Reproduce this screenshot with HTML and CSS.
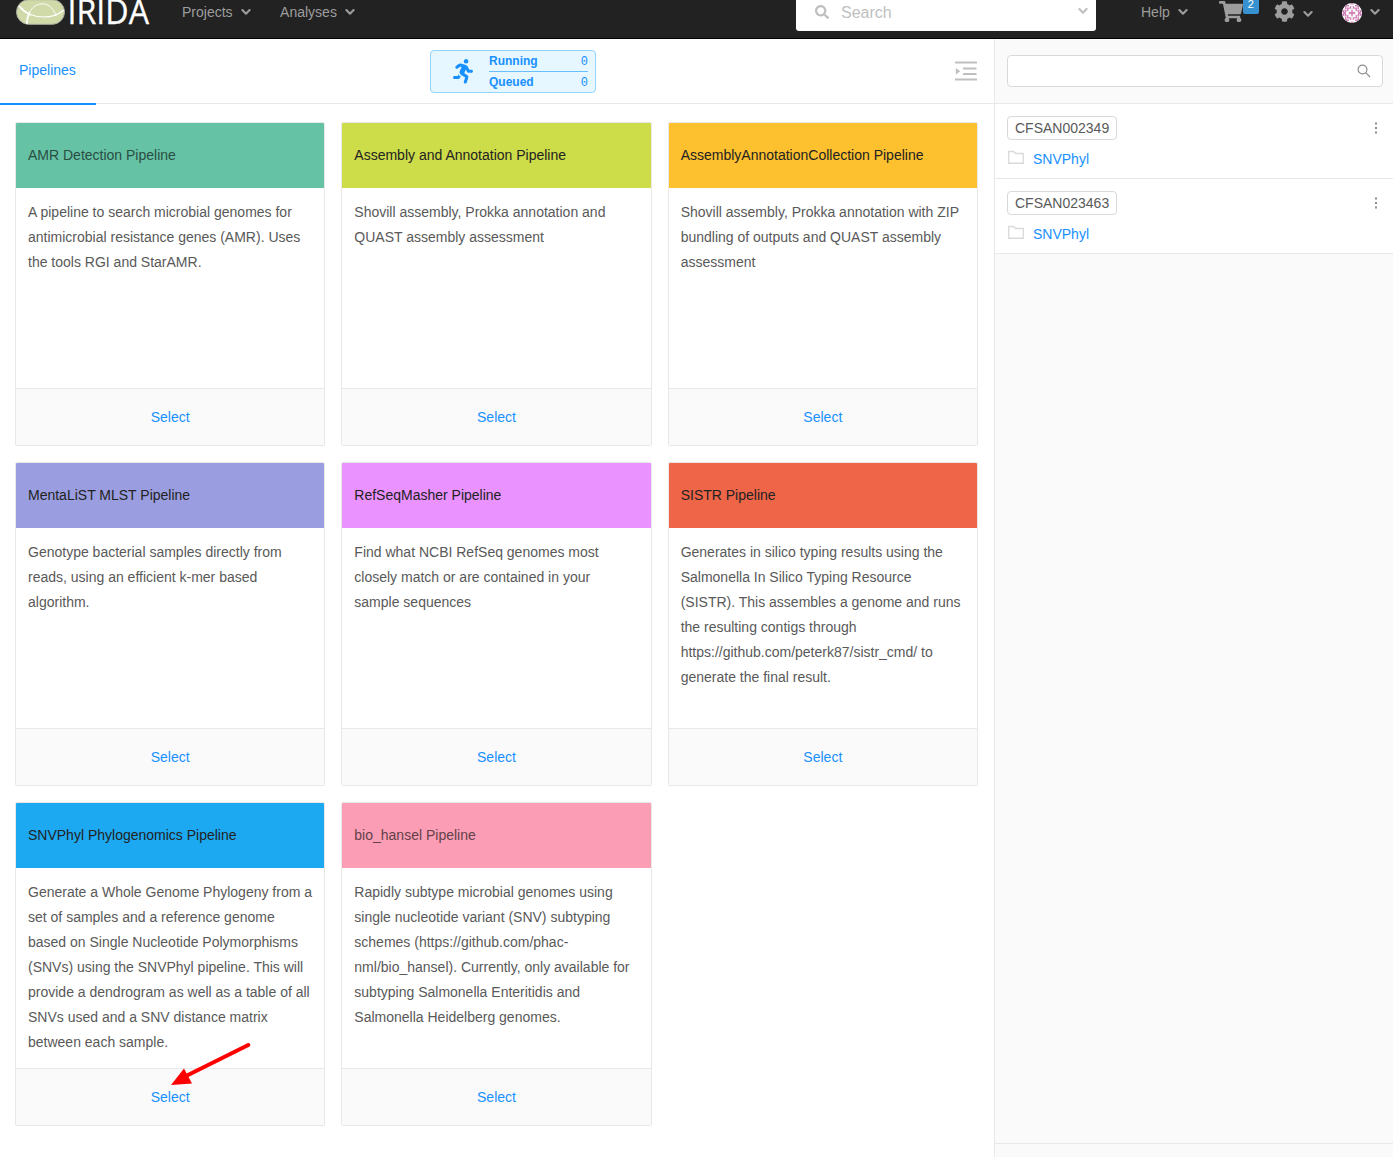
FILE: index.html
```html
<!DOCTYPE html>
<html lang="en">
<head>
<meta charset="utf-8">
<title>IRIDA - Pipelines</title>
<link rel="stylesheet" href="styles.css">
</head>
<body>
<svg class="defs" width="0" height="0" aria-hidden="true">
  <symbol id="chevron" viewBox="0 0 10 8"><path d="M1.400 2.100 5 5.700 8.600 2.100" fill="none" stroke="currentColor" stroke-width="2.100" stroke-linecap="round" stroke-linejoin="round"/></symbol>
  <symbol id="folder" viewBox="0 0 18 16"><path d="M1.750 2.500H6.500L8.500 4.500H16.250V14.250H1.750Z" fill="none" stroke="currentColor" stroke-width="1.300"/></symbol>
  <symbol id="more" viewBox="0 0 4 12"><path d="M1 .5h2v2H1zM1 5h2v2H1zM1 9.500h2v2H1z" fill="currentColor"/></symbol>
</svg>
<header class="navbar">
  <svg class="logo" width="150" height="38" viewBox="0 0 150 38">
    <rect x="16.500" y="-.3" width="48" height="24.600" rx="12.300" fill="#cfdaa8" stroke="#a9aaa0" stroke-width="1"/>
    <g fill="none" stroke="#fff"><path d="M19 5.500C26 14.500 36 17 44 17S58 15 64 10" stroke-width="1.200"/><path d="M27 24C27 14 32 4 42.500 3.800 50 4 54 10 56 16" stroke-width=".9"/><path d="M19 6C22 10 26 13 31 15M26.800 24C27 19 28 15 30 12" stroke-width="1.500"/></g>
    <text x="67.500" y="24.300" textLength="81.500" lengthAdjust="spacingAndGlyphs" class="wordmark">IRIDA</text>
  </svg>
  <nav class="menu">
    <a class="menu-item">Projects<svg class="chev"><use href="#chevron"/></svg></a>
    <a class="menu-item">Analyses<svg class="chev"><use href="#chevron"/></svg></a>
  </nav>
  <div class="global-search">
    <svg width="14" height="14" viewBox="0 0 512 512"><path fill="currentColor" d="M505 442.700L405.300 343c-4.500-4.500-10.600-7-17-7H372c27.600-35.300 44-79.700 44-128C416 93.100 322.900 0 208 0S0 93.100 0 208s93.100 208 208 208c48.300 0 92.700-16.400 128-44v16.300c0 6.400 2.500 12.500 7 17l99.700 99.700c9.400 9.400 24.600 9.400 33.900 0l28.300-28.300c9.400-9.400 9.400-24.600.1-34zM208 336c-70.700 0-128-57.200-128-128 0-70.700 57.200-128 128-128 70.700 0 128 57.200 128 128 0 70.700-57.200 128-128 128z"/></svg>
    <span class="placeholder">Search</span>
    <svg class="chev"><use href="#chevron"/></svg>
  </div>
  <nav class="tools">
    <a class="menu-item">Help<svg class="chev"><use href="#chevron"/></svg></a>
    <a class="cart">
      <svg width="24" height="21.300" viewBox="0 0 576 512"><path fill="currentColor" d="M528.120 301.319l47.273-208C578.806 78.301 567.391 64 551.990 64H159.208l-9.166-44.810C147.758 8.021 137.930 0 126.529 0H24C10.745 0 0 10.745 0 24v16c0 13.255 10.745 24 24 24h69.883l70.248 343.435C147.325 417.100 136 435.222 136 456c0 30.928 25.072 56 56 56s56-25.072 56-56c0-15.674-6.447-29.835-16.824-40h209.647C430.447 426.165 424 440.326 424 456c0 30.928 25.072 56 56 56s56-25.072 56-56c0-22.172-12.888-41.332-31.579-50.405l5.517-24.276c3.413-15.018-8.002-29.319-23.403-29.319H218.117l-6.545-32h293.145c11.206 0 20.920-7.754 23.403-18.681z"/></svg>
      <span class="badge">2</span>
    </a>
    <a class="settings">
      <svg class="cog" width="21" height="21" viewBox="0 0 512 512"><path fill="currentColor" d="M487.400 315.700l-42.600-24.600c4.300-23.200 4.300-47 0-70.200l42.600-24.600c4.900-2.800 7.100-8.600 5.500-14-11.100-35.600-30-67.800-54.700-94.600-3.800-4.100-10-5.100-14.800-2.300L380.800 110c-17.900-15.400-38.500-27.300-60.800-35.100V25.800c0-5.600-3.900-10.500-9.400-11.700-36.700-8.200-74.300-7.800-109.200 0-5.500 1.200-9.400 6.100-9.400 11.700V75c-22.200 7.900-42.800 19.800-60.800 35.100L88.700 85.500c-4.900-2.800-11-1.900-14.800 2.300-24.700 26.700-43.600 58.900-54.700 94.600-1.700 5.400.6 11.200 5.500 14L67.300 221c-4.300 23.200-4.300 47 0 70.200l-42.600 24.600c-4.900 2.800-7.100 8.600-5.500 14 11.100 35.600 30 67.800 54.700 94.600 3.800 4.100 10 5.100 14.800 2.300l42.600-24.600c17.900 15.400 38.500 27.300 60.800 35.100v49.200c0 5.600 3.900 10.500 9.400 11.700 36.700 8.200 74.300 7.800 109.200 0 5.500-1.200 9.400-6.100 9.400-11.700v-49.200c22.200-7.900 42.800-19.800 60.800-35.100l42.600 24.600c4.900 2.800 11 1.900 14.800-2.300 24.700-26.700 43.600-58.900 54.700-94.600 1.500-5.500-.7-11.300-5.600-14.100zM256 336c-44.100 0-80-35.900-80-80s35.900-80 80-80 80 35.900 80 80-35.900 80-80 80z"/></svg>
      <svg class="chev low"><use href="#chevron"/></svg>
    </a>
    <a class="account">
      <svg class="avatar" width="20" height="20" viewBox="0 0 20 20"><clipPath id="round"><circle cx="10" cy="10" r="10"/></clipPath><g clip-path="url(#round)"><path d="M0 0h20v20H0z" fill="#fff"/><path fill="#d184b8" d="M3 2h4v1.500H4.500V6H3zM17 2h-4v1.500h2.500V6H17zM3 18h4v-1.500H4.500V14H3zM17 18h-4v-1.500h2.500V14H17zM8.500 0h3v1.500h-3zM8.500 18.500h3V20h-3zM0 7h2v2H0zM18 7h2v2h-2zM0 11h2v2H0zM18 11h2v2h-2zM1 9h3v2H1zM16 9h3v2h-3zM2.500 6.500h2V9h-2zM15.500 6.500h2V9h-2zM2.500 11h2v2.500h-2zM15.500 11h2v2.500h-2zM5 4.500h3V3h1.300v2.800H6.500V8H5zM15 4.500h-3V3h-1.300v2.800h2.800V8H15zM5 15.500h3V17h1.300v-2.800H6.500V12H5zM15 15.500h-3V17h-1.300v-2.800h2.800V12H15zM9.300 6.500h1.400v2h2.500v3h-2.500v2H9.300v-2H6.800v-3h2.500z"/><path d="M7.500 7.500h1.500V9H7.500zM11 7.500h1.500V9H11zM7.500 11h1.500v1.500H7.500zM11 11h1.500v1.500H11z" fill="#fff"/></g></svg>
      <svg class="chev"><use href="#chevron"/></svg>
    </a>
  </nav>
</header>
<div class="page">
  <main class="main">
    <div class="toolbar">
      <div class="tab">Pipelines</div>
      <div class="status">
        <svg width="20" height="24.600" viewBox="0 0 416 512"><path fill="currentColor" d="M272 96c26.510 0 48-21.490 48-48S298.510 0 272 0s-48 21.490-48 48 21.490 48 48 48zM113.690 317.470l-14.800 34.520H32c-17.670 0-32 14.330-32 32s14.330 32 32 32h77.450c19.250 0 36.580-11.440 44.110-29.090l8.790-20.520-10.670-6.300c-17.320-10.230-30.060-25.370-37.990-42.610zM384 223.990h-44.030l-26.060-53.250c-12.500-25.550-35.450-44.230-61.780-50.940l-71.080-21.140c-28.300-6.800-57.770-.55-80.840 17.140l-39.670 30.410c-14.030 10.750-16.690 30.830-5.940 44.860s30.840 16.690 44.860 5.940l39.690-30.410c7.670-5.890 17.440-8 25.270-6.140l14.700 4.370-37.460 87.390c-12.620 29.480-1.310 64.010 26.300 80.310l84.980 50.170-27.470 87.730c-5.280 16.860 4.110 34.820 20.970 40.090 3.190 1 6.410 1.480 9.580 1.480 13.610 0 26.230-8.770 30.520-22.450l31.640-101.060c5.910-20.770-2.890-43.080-21.640-54.390l-61.240-36.140 31.310-78.280 20.270 41.430c8 16.340 24.920 26.890 43.110 26.890H384c17.670 0 32-14.330 32-32s-14.330-31.990-32-31.990z"/></svg>
        <div class="counts">
          <div class="count"><b>Running</b><span>0</span></div>
          <div class="count"><b>Queued</b><span>0</span></div>
        </div>
      </div>
      <svg class="fold" width="22" height="20" viewBox="0 0 22 20"><path d="M0 1.500h22M8 7.500h13.500M8 13h13.500M0 18.500h22" fill="none" stroke="currentColor" stroke-width="1.800"/><path d="M.8 7v6.500L5.200 10.200z" fill="currentColor"/></svg>
    </div>
    <div class="grid">
      <section class="card"><h2 class="green">AMR Detection Pipeline</h2><p>A pipeline to search microbial genomes for antimicrobial resistance genes (AMR). Uses the tools RGI and StarAMR.</p><a class="select">Select</a></section>
      <section class="card"><h2 class="lime">Assembly and Annotation Pipeline</h2><p>Shovill assembly, Prokka annotation and QUAST assembly assessment</p><a class="select">Select</a></section>
      <section class="card"><h2 class="amber">AssemblyAnnotationCollection Pipeline</h2><p>Shovill assembly, Prokka annotation with ZIP bundling of outputs and QUAST assembly assessment</p><a class="select">Select</a></section>
      <section class="card"><h2 class="indigo">MentaLiST MLST Pipeline</h2><p>Genotype bacterial samples directly from reads, using an efficient k-mer based algorithm.</p><a class="select">Select</a></section>
      <section class="card"><h2 class="violet">RefSeqMasher Pipeline</h2><p>Find what NCBI RefSeq genomes most closely match or are contained in your sample sequences</p><a class="select">Select</a></section>
      <section class="card"><h2 class="red">SISTR Pipeline</h2><p>Generates in silico typing results using the Salmonella In Silico Typing Resource (SISTR). This assembles a genome and runs the resulting contigs through https://github.com/peterk87/sistr_cmd/ to generate the final result.</p><a class="select">Select</a></section>
      <section class="card"><h2 class="blue">SNVPhyl Phylogenomics Pipeline</h2><p>Generate a Whole Genome Phylogeny from a set of samples and a reference genome based on Single Nucleotide Polymorphisms (SNVs) using the SNVPhyl pipeline. This will provide a dendrogram as well as a table of all SNVs used and a SNV distance matrix between each sample.</p><a class="select">Select</a>
        <svg class="pointer" width="82" height="44" viewBox="0 0 82 44"><path d="M78.300 3 17 33.500" stroke="red" stroke-width="4" stroke-linecap="round"/><path d="M1 43 14 26.500 22 41.500z" fill="red"/></svg>
      </section>
      <section class="card"><h2 class="pink">bio_hansel Pipeline</h2><p>Rapidly subtype microbial genomes using single nucleotide variant (SNV) subtyping schemes (https://github.com/phac-nml/bio_hansel). Currently, only available for subtyping Salmonella Enteritidis and Salmonella Heidelberg genomes.</p><a class="select">Select</a></section>
    </div>
  </main>
  <aside class="side">
    <div class="filter"><div class="filter-box">
      <svg width="14" height="14" viewBox="0 0 14 14" fill="none" stroke="currentColor" stroke-width="1.200"><circle cx="5.500" cy="5.500" r="4.400"/><path d="M8.700 8.700 13 13"/></svg>
    </div></div>
    <div class="samples">
      <div class="sample">
        <div class="row"><span class="tag">CFSAN002349</span><svg class="more" width="4" height="12"><use href="#more"/></svg></div>
        <div class="project"><svg width="18" height="16"><use href="#folder"/></svg><a>SNVPhyl</a></div>
      </div>
      <div class="sample">
        <div class="row"><span class="tag">CFSAN023463</span><svg class="more" width="4" height="12"><use href="#more"/></svg></div>
        <div class="project"><svg width="18" height="16"><use href="#folder"/></svg><a>SNVPhyl</a></div>
      </div>
    </div>
    <div class="side-footer"></div>
  </aside>
</div>
</body>
</html>
```
FILE: styles.css
```css
* { box-sizing: border-box; }
body {
  margin: 0;
  height: 1157px;
  overflow: hidden;
  display: flex;
  flex-direction: column;
  font: 14px/25px "Liberation Sans", Arial, sans-serif;
  color: #595959;
  background: #fff;
}
svg { display: block; flex: none; }
.defs { position: absolute; }

.navbar {
  height: 39px;
  flex: none;
  display: flex;
  align-items: flex-start;
  background: #222;
  border-bottom: 1px solid #000;
  color: #9d9d9d;
}
.logo { overflow: visible; }
.wordmark { font: 35.500px "Open Sans", "Noto Sans", sans-serif; fill: #fff; stroke: #fff; stroke-width: .3px; }
.menu, .tools, .menu-item, .settings, .account, .cart { display: flex; align-items: center; height: 24px; }
.menu { margin-left: 32px; gap: 29.500px; width: 614px; }
.menu-item { gap: 8px; line-height: 24px; }
.chev { width: 10px; height: 8px; }
.global-search {
  width: 300px;
  height: 31px;
  padding: 0 8px 7px 19px;
  display: flex;
  align-items: center;
  background: #fff;
  color: #bfbfbf;
  border-radius: 0 0 3px 3px;
}
.global-search .chev { margin-bottom: 2px; }
.placeholder { flex: 1; margin-left: 12px; padding-top: 2px; font-size: 16px; line-height: 24px; }
.tools { margin-left: 45px; }
.cart { margin-left: 31px; align-items: flex-start; }
.cart svg { margin-top: 1px; }
.badge {
  width: 16px;
  height: 14px;
  background: #3892d2;
  color: #fff;
  font-size: 11px;
  line-height: 8px;
  text-align: center;
  border-radius: 0 0 2px 2px;
}
.settings { margin-left: 15px; gap: 8px; }
.cog { margin-bottom: 2px; }
.low { margin-top: 4px; }
.account { margin-left: 29px; gap: 8px; }
.avatar { margin-top: 2px; }

.page { flex: 1; display: flex; min-height: 0; }
.main { width: 995px; border-right: 1px solid #e8e8e8; }
.toolbar {
  height: 65px;
  border-bottom: 1px solid #e8e8e8;
  display: flex;
  align-items: flex-start;
}
.tab {
  width: 96px;
  height: 66px;
  padding-left: 19px;
  line-height: 63px;
  color: #1890ff;
  border-bottom: 2px solid #1890ff;
}
.status {
  width: 166px;
  height: 43px;
  margin: 11px 0 0 334px;
  padding: 0 7px 0 22px;
  display: flex;
  align-items: center;
  justify-content: space-between;
  color: #1890ff;
  background: #e6f7ff;
  border: 1px solid #91d5ff;
  border-radius: 4px;
}
.counts { width: 99px; }
.count { display: flex; justify-content: space-between; height: 20px; font-size: 12px; line-height: 20px; }
.count span { font-family: "Liberation Mono", monospace; padding-top: 1px; }
.count + .count { height: 21px; border-top: 1px solid #69c0ff; }
.fold { margin: 22px 17px 0 auto; color: #bfbfbf; }

.grid {
  padding: 18px 16px 0 15px;
  display: grid;
  grid-template-columns: repeat(3, 1fr);
  grid-auto-rows: 324px;
  gap: 16px;
}
.card {
  position: relative;
  display: flex;
  flex-direction: column;
  border: 1px solid #e8e8e8;
  border-radius: 2px;
}
.card h2 { margin: 0; height: 65px; padding: 0 12px; font-size: 14px; line-height: 65px; font-weight: 400; color: #222; border-radius: 1px 1px 0 0; }
.card p { margin: 0; flex: 1; padding: 12px 12px 0; }
.card .select { height: 57px; line-height: 56px; text-align: center; color: #1890ff; background: #fafafa; border-top: 1px solid #e8e8e8; }
.card .green { background: #66c2a5; color: #294e42; }
.card .lime { background: #cddc49; }
.card .amber { background: #fdc02f; }
.card .indigo { background: #9a9ee0; }
.card .violet { background: #ea92ff; }
.card .red { background: #ef6548; }
.card .blue { background: #1da9f2; }
.card .pink { background: #fb9eb5; color: #644048; }
.pointer { position: absolute; left: 154px; top: 239px; }

.side { flex: 1; display: flex; flex-direction: column; background: #fafafa; }
.filter { height: 65px; padding: 16px 10px 0 12px; border-bottom: 1px solid #e8e8e8; }
.filter-box {
  height: 32px;
  padding-right: 11px;
  display: flex;
  align-items: center;
  justify-content: flex-end;
  background: #fff;
  color: #8c8c8c;
  border: 1px solid #d9d9d9;
  border-radius: 4px;
}
.samples { flex: 1; }
.sample { height: 75px; padding: 12px 15px 0 12px; background: #fff; border-bottom: 1px solid #e8e8e8; }
.row { display: flex; justify-content: space-between; align-items: center; height: 24px; }
.tag { height: 24px; padding: 0 7px; line-height: 22px; border: 1px solid #d9d9d9; border-radius: 4px; }
.more { color: #8c8c8c; }
.project { display: flex; gap: 8px; margin-top: 7px; line-height: 24px; color: #d9d9d9; }
.project svg { margin-top: 2px; }
.project a { color: #1890ff; }
.side-footer { height: 14px; border-top: 1px solid #e8e8e8; }
```
